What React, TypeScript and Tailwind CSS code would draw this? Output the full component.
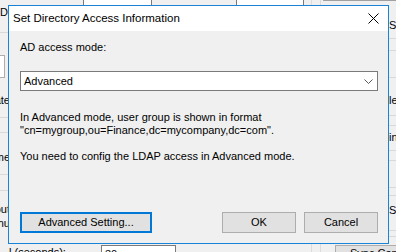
const font = { fontFamily: '"Liberation Sans", Arial, sans-serif' };

const rightLines = [38, 50, 77, 115, 125, 150, 160, 187, 195, 230, 236];

function Backdrop() {
  return (
    <>
      {/* window behind: left column, mostly hidden by the dialog */}
      <div className="absolute left-0 top-[6px] text-[11px] leading-[13px]">D</div>
      <div className="absolute left-0 top-[32px] h-px w-[10px] bg-[#d9d9d9]" />
      <div className="absolute left-[-6px] top-[55px] h-[23px] w-[11px] border border-[#adadad] bg-white" />
      <div className="absolute right-[386px] top-[94px] whitespace-nowrap text-[11px] leading-[13px]">Update</div>
      <div className="absolute left-0 top-[117px] h-px w-[10px] bg-[#d9d9d9]" />
      <div className="absolute left-0 top-[132px] h-px w-[10px] bg-[#d9d9d9]" />
      <div className="absolute right-[386px] top-[151px] whitespace-nowrap text-[11px] leading-[13px]">Name</div>
      <div className="absolute left-0 top-[174px] h-px w-[10px] bg-[#d9d9d9]" />
      <div className="absolute left-0 top-[190px] h-px w-[10px] bg-[#d9d9d9]" />
      <div className="absolute right-[386px] top-[203px] whitespace-nowrap text-[11px] leading-[13px]">Timeout</div>
      <div className="absolute right-[386px] top-[217px] whitespace-nowrap text-[11px] leading-[13px]">Menu</div>

      {/* top edge */}
      <div className="absolute left-[83px] top-[-10px] h-[16px] w-[69px] border border-[#7a7a7a] bg-white" />
      <div className="absolute left-[236px] top-[-10px] h-[16px] w-[68px] border border-[#7a7a7a] bg-white" />
      <div className="absolute left-[311px] top-0 h-[252px] w-px bg-[#dcdcdc]" />
      <div className="absolute left-[320px] top-0 h-[252px] w-px bg-[#dcdcdc]" />
      <div className="absolute left-[323px] top-0 h-px w-[73px] bg-[#a0a0a0]" />

      {/* right column */}
      <div className="absolute left-[389px] top-[19px] text-[11px] leading-[13px]">Sync</div>
      {rightLines.map((y) => (
        <div key={y} className="absolute left-[389px] h-px w-[7px] bg-[#d9d9d9]" style={{ top: y }} />
      ))}
      <div className="absolute left-[389px] top-[94px] text-[11px] leading-[13px]">length</div>
      <div className="absolute left-[389px] top-[131px] text-[11px] leading-[13px]">interval</div>
      <div className="absolute left-[389px] top-[204px] text-[11px] leading-[13px]">Save</div>

      {/* bottom edge */}
      <div className="absolute left-[9px] top-[246px] whitespace-nowrap text-[11px] leading-[13px]">l (seconds):</div>
      <div className="absolute left-[101px] top-[245px] h-[20px] w-[75px] border border-[#7a7a7a] bg-white pl-[3px] pt-[2px] text-[11px] leading-[13px]">30</div>
      <div className="absolute left-[335px] top-[245px] h-[20px] w-[80px] whitespace-nowrap border border-[#adadad] bg-[#e1e1e1] pl-[14px] pt-[1px] text-[11px] leading-[13px]">Sync Config</div>
    </>
  );
}

export default function App() {
  return (
    <div className="relative h-[252px] w-[396px] overflow-hidden bg-[#f0f0f0] text-black" style={font}>
      <Backdrop />

      {/* dialog */}
      <div className="absolute left-[8px] top-[5px] flex h-[239px] w-[381px] flex-col border border-[#1883d7] bg-[#f0f0f0]">
        <div className="flex h-[25px] shrink-0 items-center justify-between bg-white pl-[4px] pr-[9px]">
          <span className="text-[11.5px] leading-[13px]">Set Directory Access Information</span>
          <svg width="11" height="11" viewBox="0 0 11 11">
            <path d="M0.5 0.5 L10.5 10.5 M10.5 0.5 L0.5 10.5" stroke="#000" strokeWidth="1" />
          </svg>
        </div>

        <div className="flex flex-1 flex-col pl-[11px] pr-[10px] text-[11px] leading-[13px]">
          <p className="mt-[10px]">AD access mode:</p>

          <div className="mt-[17px] flex h-[20px] items-center justify-between border border-[#7a7a7a] bg-white pl-[3px] pr-[4px]">
            <span>Advanced</span>
            <svg width="9" height="5" viewBox="0 0 9 5">
              <path d="M0.5 0.5 L4.5 4.5 L8.5 0.5" fill="none" stroke="#5a5a5a" strokeWidth="1" />
            </svg>
          </div>

          <p className="mt-[20px]">
            In Advanced mode, user group is shown in format
            <br />
            "cn=mygroup,ou=Finance,dc=mycompany,dc=com".
          </p>
          <p className="mt-[13px]">You need to config the LDAP access in Advanced mode.</p>

          <div className="mt-auto mb-[10px] flex items-center">
            <button className="h-[21px] w-[132px] border-2 border-[#0078d7] bg-[#e1e1e1] text-[11px] leading-none">
              Advanced Setting...
            </button>
            <button className="ml-auto h-[21px] w-[74px] border border-[#adadad] bg-[#e1e1e1] text-[11px] leading-none">
              OK
            </button>
            <button className="ml-[8px] h-[21px] w-[74px] border border-[#adadad] bg-[#e1e1e1] text-[11px] leading-none">
              Cancel
            </button>
          </div>
        </div>
      </div>
    </div>
  );
}
